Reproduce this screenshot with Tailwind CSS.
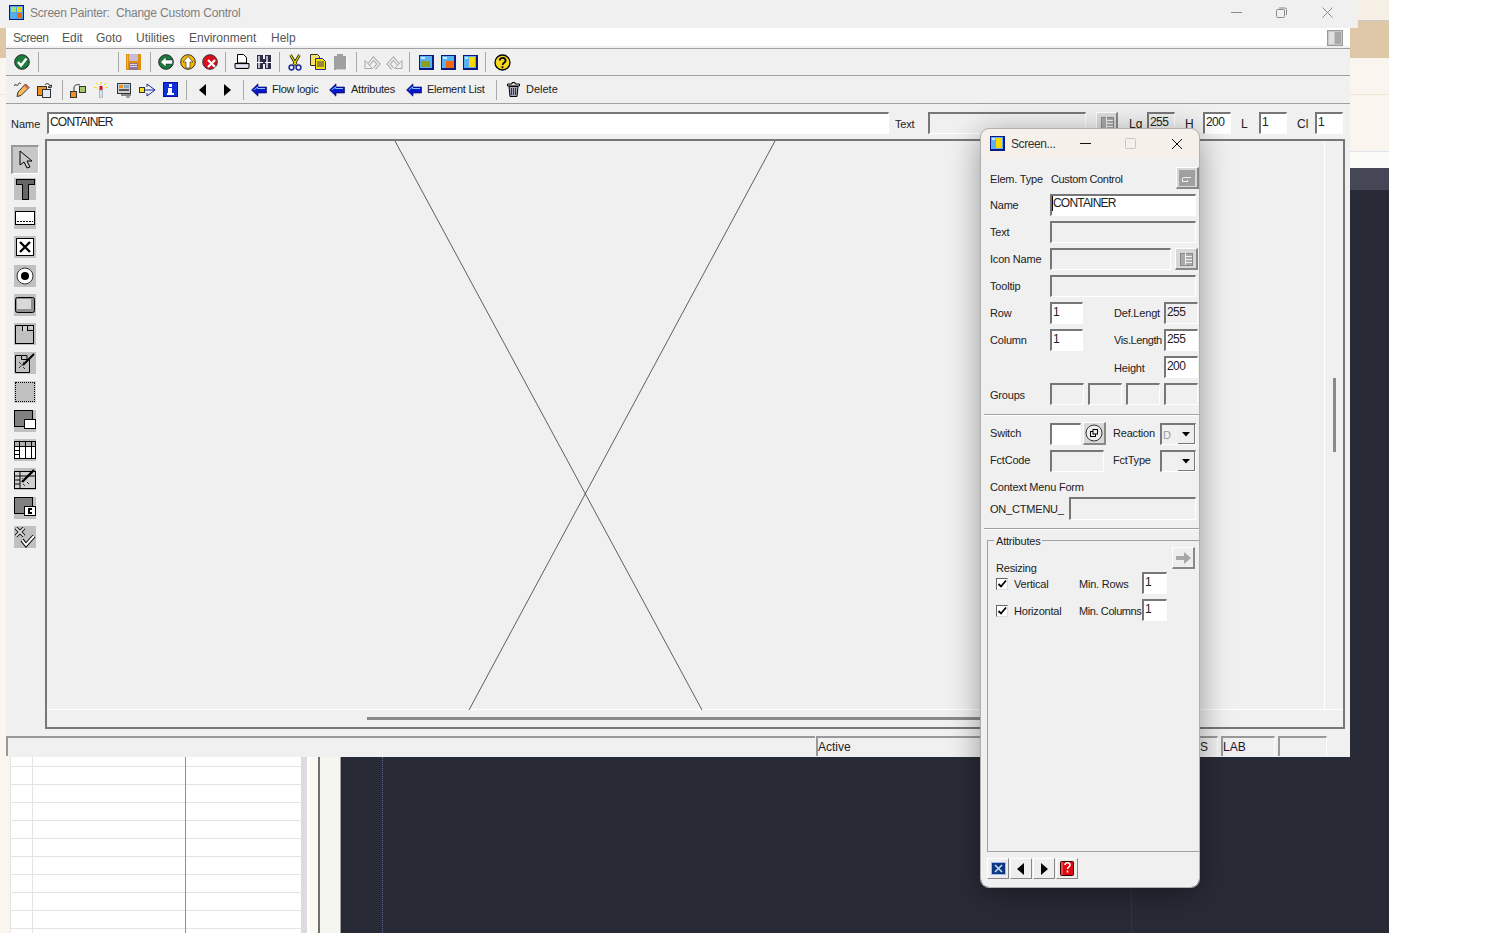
<!DOCTYPE html>
<html lang="en">
<head>
  <meta charset="UTF-8">
  <title>Screen Painter: Change Custom Control</title>
  <script src="https://cdn.jsdelivr.net/npm/@tailwindcss/browser@4"></script>
</head>
<body class="bg-white">
<div class="relative w-[1486px] h-[933px] overflow-hidden bg-white font-['Liberation_Sans',sans-serif] text-[11px] text-[#222]">

  <!-- desktop behind, right side -->
  <div class="absolute left-[1350px] top-0 w-[39px] h-[933px] flex flex-col bg-[#282a36]">
    <div class="h-[20px] bg-[#f5efe6]"></div>
    <div class="h-[38px] bg-[#dec8a8] border-t border-[#c9c9c9]"></div>
    <div class="h-[36px] bg-[#faf6ef]"></div>
    <div class="h-[57px] bg-[#faf6ef] border-t border-[#f3e6d4]"></div>
    <div class="h-[17px] bg-[#fbfbf8] border-t border-[#dfe3ea]"></div>
    <div class="h-[22px] bg-[#454757]"></div>
  </div>

  <!-- desktop behind, bottom -->
  <div class="absolute left-0 top-[757px] w-[1350px] h-[176px] flex bg-[#282a36]">
    <div class="w-[10px] bg-[#f9f6ee]"></div>
    <div class="relative w-[291px] bg-white">
      <div class="h-[10px] border-b border-[#e4e4e4]"></div>
      <div class="h-[18px] border-b border-[#e4e4e4]"></div>
      <div class="h-[18px] border-b border-[#e4e4e4]"></div>
      <div class="h-[18px] border-b border-[#e4e4e4]"></div>
      <div class="h-[18px] border-b border-[#e4e4e4]"></div>
      <div class="h-[18px] border-b border-[#e4e4e4]"></div>
      <div class="h-[18px] border-b border-[#e4e4e4]"></div>
      <div class="h-[18px] border-b border-[#e4e4e4]"></div>
      <div class="h-[18px] border-b border-[#e4e4e4]"></div>
      <div class="h-[18px] border-b border-[#e4e4e4]"></div>
      <div class="absolute left-0 top-0 w-px h-full bg-[#e4e4e4]"></div>
      <div class="absolute left-[22px] top-0 w-px h-full bg-[#e4e4e4]"></div>
      <div class="absolute left-[175px] top-0 w-px h-full bg-[#8f8f8f]"></div>
    </div>
    <div class="w-[6px] bg-[#dcdcde]"></div>
    <div class="w-[3px] bg-white"></div>
    <div class="w-[8px] bg-[#fbf8f2]"></div>
    <div class="w-[2px] bg-[#6e6e6e]"></div>
    <div class="w-[21px] bg-[#f6f6f0] border-r border-[#a0a0a0]"></div>
    <div class="w-[42px] border-r border-dotted border-[#5a6290]"></div>
    <div class="w-[749px] border-r border-dotted border-[#6a2a38]"></div>
  </div>
  <div class="absolute left-0 top-0 w-[6px] h-[757px] flex flex-col bg-[#f9f6ee]">
    <div class="h-[28px] bg-[#f0f0f0]"></div>
    <div class="h-[30px] bg-[#dec8a8]"></div>
    <div class="h-[36px]"></div>
    <div class="border-t border-[#f3e6d4]"></div>
  </div>

  <!-- title bar -->
  <div class="absolute left-0 top-0 w-[1358px] h-[28px] bg-[#f0f0f0] flex items-center pb-[3px]">
    <svg class="ml-[9px]" width="15" height="15" viewBox="0 0 15 15" shape-rendering="crispEdges"><rect width="15" height="15" fill="#0a1a70"/><rect x="1" y="1" width="13" height="13" fill="#4aa8f0"/><rect x="2" y="2" width="5" height="5" fill="#a8e070"/><rect x="8" y="2" width="5" height="5" fill="#f8d000"/><rect x="2" y="8" width="5" height="5" fill="#58b0e8"/><rect x="8" y="8" width="5" height="5" fill="#f06810"/></svg>
    <div class="ml-[6px] w-[230px] text-[12px] text-[#7f7f7f] whitespace-pre tracking-[-0.2px]">Screen Painter:  Change Custom Control</div>
    <svg class="ml-[971px]" width="11" height="11" viewBox="0 0 11 11"><path d="M0 5.500h11" stroke="#8a8a8a"/></svg>
    <svg class="ml-[34px]" width="11" height="11" viewBox="0 0 11 11" fill="none" stroke="#8a8a8a"><rect x="0.500" y="2.500" width="8" height="8" rx="1"/><path d="M3 1h6a1.500 1.500 0 0 1 1.500 1.500V8"/></svg>
    <svg class="ml-[35px]" width="11" height="11" viewBox="0 0 11 11"><path d="M0.500 0.500l10 10M10.500 0.500l-10 10" stroke="#8a8a8a"/></svg>
  </div>

  <!-- main SAP window -->
  <div class="absolute left-[6px] top-[28px] w-[1344px] h-[729px] bg-[#f0f0f0] flex flex-col">
    <!-- menu -->
    <div class="h-[18px] bg-white flex items-center pl-[7px] pt-px text-[#555] text-[12px]">
      <span class="w-[49px] tracking-[-0.4px]">Screen</span><span class="w-[34px]">Edit</span><span class="w-[40px]">Goto</span><span class="w-[53px]">Utilities</span><span class="w-[82px]">Environment</span><span>Help</span>
      <div class="ml-auto mr-[7px] w-[16px] h-[16px] border border-[#9a9a9a] bg-[#c8c8c8] flex justify-center gap-px p-px"><div class="w-[5px] bg-[#e0e0e0]"></div><div class="w-[6px] bg-[#a8a8a8]"></div></div>
    </div>
    <div class="h-[2px]"></div>

    <!-- toolbar 1 -->
    <div class="h-[27px] border-t border-[#a0a0a0] flex items-center pl-[5px]">
      <div class="w-[22px] flex justify-center">
        <svg width="16" height="16" viewBox="0 0 16 16"><circle cx="8" cy="8" r="7.300" fill="#1f7a3e" stroke="#1a3020"/><path d="M4 8l3 3.500 5.500-7" fill="none" stroke="#fff" stroke-width="2.400"/></svg>
      </div>
      <div class="ml-[5px] w-px h-[20px] bg-[#a8a8a8]"></div>
      <div class="ml-[79px] w-px h-[20px] bg-[#a8a8a8]"></div>
      <div class="ml-[3px] w-[22px] flex justify-center">
        <svg width="15" height="16" viewBox="0 0 15 16" shape-rendering="crispEdges"><rect width="15" height="16" fill="#e08e12"/><rect x="1" y="1" width="1" height="14" fill="#f8b040"/><rect x="3" y="0" width="9" height="7" fill="#c8bcd4"/><rect x="3" y="9" width="9" height="7" fill="#8a7a9a"/><rect x="4" y="10" width="7" height="1" fill="#e0d8e8"/><rect x="4" y="12" width="7" height="1" fill="#e0d8e8"/></svg>
      </div>
      <div class="ml-[6px] w-px h-[20px] bg-[#a8a8a8]"></div>
      <div class="ml-1 w-[22px] flex justify-center">
        <svg width="16" height="16" viewBox="0 0 16 16"><circle cx="8" cy="8" r="7.300" fill="#1f7a3e" stroke="#1a3020"/><path d="M2.500 8l5.500-5v3h6.500v4H8v3z" fill="#fff" stroke="#123" stroke-width="0.500"/></svg>
      </div>
      <div class="w-[22px] flex justify-center">
        <svg width="16" height="16" viewBox="0 0 16 16"><circle cx="8" cy="8" r="7.300" fill="#f4b800" stroke="#333"/><path d="M8 2.500l5 5.500h-3v6H6V8H3z" fill="#fff" stroke="#222" stroke-width="0.600"/></svg>
      </div>
      <div class="w-[22px] flex justify-center">
        <svg width="16" height="16" viewBox="0 0 16 16"><circle cx="8" cy="8" r="7.300" fill="#d8101c" stroke="#333"/><path d="M6 6l7 7M13 6l-7 7" stroke="#fff" stroke-width="2.200"/></svg>
      </div>
      <div class="ml-1 w-px h-[20px] bg-[#a8a8a8]"></div>
      <div class="ml-[5px] w-[22px] flex justify-center">
        <svg width="16" height="16" viewBox="0 0 16 16"><path d="M3.500 0.500h6l3 3V9h-9z" fill="#fff" stroke="#000"/><path d="M1 9.500h14v4a1 1 0 0 1-1 1H2a1 1 0 0 1-1-1z" fill="#c8c8d8" stroke="#000"/><path d="M2 12h12" stroke="#fff"/></svg>
      </div>
      <div class="w-[22px] flex justify-center">
        <svg width="16" height="16" viewBox="0 0 16 16" shape-rendering="crispEdges"><rect x="1" y="1" width="6" height="14" fill="#2c2c44"/><rect x="9" y="1" width="6" height="14" fill="#2c2c44"/><rect x="7" y="5" width="2" height="5" fill="#2c2c44"/><rect x="2" y="2" width="2" height="12" fill="#b8b8d0"/><rect x="10" y="2" width="2" height="12" fill="#b8b8d0"/><rect x="1" y="8" width="6" height="1" fill="#fff"/><rect x="9" y="8" width="6" height="1" fill="#fff"/></svg>
      </div>
      <div class="ml-1 w-px h-[20px] bg-[#a8a8a8]"></div>
      <div class="ml-1 w-[22px] flex justify-center">
        <svg width="14" height="17" viewBox="0 0 14 17" fill="none"><path d="M2.500 1l6 10M11.500 1l-6 10" stroke="#000" stroke-width="2.600"/><path d="M2.500 1l6 10M11.500 1l-6 10" stroke="#f0d800" stroke-width="1.400"/><circle cx="3.500" cy="13.500" r="2.400" stroke="#1a2a9a" stroke-width="1.500"/><circle cx="10.500" cy="13.500" r="2.400" stroke="#1a2a9a" stroke-width="1.500"/></svg>
      </div>
      <div class="ml-px w-[22px] flex justify-center">
        <svg width="16" height="16" viewBox="0 0 16 16"><path d="M0.500 0.500h7l2 2v9h-9z" fill="#f8e060" stroke="#303030"/><path d="M5.500 4.500h7l3 3v8h-10z" fill="#f8e000" stroke="#1a2a9a"/><path d="M7 8h7M7 10h7M7 12h7" stroke="#303080"/></svg>
      </div>
      <div class="w-[22px] flex justify-center">
        <svg width="15" height="16" viewBox="0 0 15 16"><path d="M4 0h6v2h3v14H1V2h3z" fill="#a0a0a0"/><path d="M14 4v12H3" fill="none" stroke="#fff"/></svg>
      </div>
      <div class="ml-[5px] w-px h-[20px] bg-[#a8a8a8]"></div>
      <div class="ml-1 w-[22px] flex justify-center">
        <svg width="17" height="15" viewBox="0 0 17 15" fill="none"><path d="M5 9l4.500-5.500 5 5.500-4 4.500" stroke="#a8a8a8" stroke-width="3.400"/><path d="M5 9l4.500-5.500 5 5.500-4 4.500" stroke="#f0f0f0" stroke-width="1.400"/><path d="M1 5.500v8h7.500z" fill="#f0f0f0" stroke="#a8a8a8"/></svg>
      </div>
      <div class="w-[22px] flex justify-center">
        <svg width="17" height="15" viewBox="0 0 17 15" fill="none"><path d="M12 9L7.500 3.500 2.500 9l4 4.500" stroke="#a8a8a8" stroke-width="3.400"/><path d="M12 9L7.500 3.500 2.500 9l4 4.500" stroke="#f0f0f0" stroke-width="1.400"/><path d="M16 5.500v8H8.500z" fill="#f0f0f0" stroke="#a8a8a8"/></svg>
      </div>
      <div class="ml-1 w-px h-[20px] bg-[#a8a8a8]"></div>
      <div class="ml-[5px] w-[22px] flex justify-center">
        <svg width="15" height="15" viewBox="0 0 15 15" shape-rendering="crispEdges"><rect width="15" height="15" fill="#0a1a80"/><rect x="1" y="1" width="12" height="12" fill="#5ab0f0"/><rect x="2" y="6" width="9" height="6" fill="#88a020"/><rect x="2" y="2" width="4" height="2" fill="#c8e8ff"/></svg>
      </div>
      <div class="w-[22px] flex justify-center">
        <svg width="15" height="15" viewBox="0 0 15 15" shape-rendering="crispEdges"><rect width="15" height="15" fill="#0a1a80"/><rect x="1" y="1" width="12" height="12" fill="#5ab0f0"/><rect x="5" y="6" width="8" height="7" fill="#f06810"/><rect x="2" y="2" width="4" height="2" fill="#c8e8ff"/></svg>
      </div>
      <div class="w-[22px] flex justify-center">
        <svg width="15" height="15" viewBox="0 0 15 15" shape-rendering="crispEdges"><rect width="15" height="15" fill="#0a1a80"/><rect x="1" y="1" width="12" height="12" fill="#5ab0f0"/><rect x="6" y="2" width="6" height="10" fill="#f8d800"/><rect x="2" y="2" width="3" height="2" fill="#c8e8ff"/></svg>
      </div>
      <div class="ml-1 w-px h-[20px] bg-[#a8a8a8]"></div>
      <div class="ml-[5px] w-[22px] flex justify-center">
        <svg width="17" height="17" viewBox="0 0 17 17" fill="none"><circle cx="8.500" cy="8.500" r="7.500" fill="#f8d820" stroke="#000" stroke-width="1.300"/><path d="M5.800 6.500c0-3.500 5.800-3.500 5.800 0 0 2.300-3 2.300-3 4.500" stroke="#000" stroke-width="1.800"/><path d="M8.500 12.200v2" stroke="#000" stroke-width="1.800"/></svg>
      </div>
    </div>

    <!-- toolbar 2 -->
    <div class="h-[28px] border-t border-[#a0a0a0] flex items-center pl-[5px] text-[#222]">
      <div class="w-[22px] flex justify-center">
        <svg width="17" height="17" viewBox="0 0 17 17" fill="none"><path d="M0.500 5c1-4 2.500 1 3.500-1s1.500-3 3-1" stroke="#222"/><path d="M3 15.500l1-4.500 7.500-8 3.500 3.500-8 8z" fill="#f8b860" stroke="#333"/><path d="M10.500 4l3.500 3.500" stroke="#e05040" stroke-width="1.500"/></svg>
      </div>
      <div class="ml-px w-[22px] flex justify-center">
        <svg width="16" height="16" viewBox="0 0 16 16"><rect x="0.500" y="4.500" width="9" height="9" fill="#f09020" stroke="#333"/><rect x="5.500" y="7.500" width="8" height="8" fill="#e0ecf8" stroke="#333"/><path d="M8 3c1-2 4-2 5 1l1.500-1-.5 3-3-1 1.500-.5" fill="none" stroke="#222"/></svg>
      </div>
      <div class="ml-[6px] w-px h-[20px] bg-[#a8a8a8]"></div>
      <div class="ml-1 w-[22px] flex justify-center">
        <svg width="16" height="16" viewBox="0 0 16 16"><path d="M4 10V6c0-3 3-4 6-3" fill="none" stroke="#333"/><rect x="0.500" y="9.500" width="6" height="6" fill="#f09020" stroke="#333"/><rect x="9.500" y="4.500" width="6" height="6" fill="#a8c870" stroke="#333"/></svg>
      </div>
      <div class="ml-px w-[22px] flex justify-center">
        <svg width="16" height="16" viewBox="0 0 16 16"><path d="M8 0v3M1 5l3 1M15 5l-3 1M3 1l2 2M13 1l-2 2" stroke="#f8d800"/><rect x="6.500" y="4" width="3" height="4" fill="#d81020"/><rect x="6.500" y="8" width="3" height="8" fill="#d8e0e8" stroke="#8090a0" stroke-width="0.500"/></svg>
      </div>
      <div class="ml-px w-[22px] flex justify-center">
        <svg width="16" height="16" viewBox="0 0 16 16" shape-rendering="crispEdges"><rect x="1" y="1" width="13" height="10" fill="#d0d0d0" stroke="#333"/><rect x="3" y="3" width="4" height="3" fill="#f09020"/><rect x="8" y="3" width="5" height="3" fill="#88a8c8"/><rect x="3" y="7" width="10" height="2" fill="#555"/><rect x="5" y="12" width="10" height="2" fill="#888"/><rect x="10" y="14" width="4" height="2" fill="#a0a0a0"/></svg>
      </div>
      <div class="ml-px w-[22px] flex justify-center">
        <svg width="17" height="16" viewBox="0 0 17 16" fill="none"><rect x="0.500" y="5.500" width="5" height="5" fill="#f8e020" stroke="#333"/><path d="M6 8h10M8 2l8 6-8 6M8 2v3M8 14v-3" stroke="#1a2a9a"/></svg>
      </div>
      <div class="ml-px w-[22px] flex justify-center">
        <svg width="15" height="15" viewBox="0 0 15 15" shape-rendering="crispEdges"><rect width="15" height="15" fill="#0a10a0"/><rect x="1" y="1" width="13" height="13" fill="#1030d8"/><rect x="6" y="2" width="3" height="3" fill="#fff"/><rect x="5" y="6" width="4" height="6" fill="#fff"/><rect x="4" y="11" width="7" height="2" fill="#fff"/></svg>
      </div>
      <div class="ml-[5px] w-px h-[20px] bg-[#a8a8a8]"></div>
      <div class="ml-[5px] w-[22px] flex justify-center">
        <svg width="8" height="12" viewBox="0 0 8 12"><path d="M7 0v12L0 6z" fill="#000"/></svg>
      </div>
      <div class="ml-[2px] w-[22px] flex justify-center">
        <svg width="8" height="12" viewBox="0 0 8 12"><path d="M1 0v12l7-6z" fill="#000"/></svg>
      </div>
      <div class="ml-[5px] w-px h-[20px] bg-[#a8a8a8]"></div>
      <div class="ml-1 w-[22px] flex justify-center">
        <svg width="16" height="14" viewBox="0 0 16 14"><path d="M0.500 7L7 0.800V4h8.500v6H7v3.200z" fill="#0818c8" stroke="#000050" stroke-width="0.600"/><path d="M3 7l3.500-3v1.500H14" fill="none" stroke="#80c8ff"/></svg>
      </div>
      <div class="ml-[2px] w-[47px] whitespace-nowrap tracking-[-0.25px]">Flow logic</div>
      <div class="ml-[7px] w-[22px] flex justify-center">
        <svg width="16" height="14" viewBox="0 0 16 14"><path d="M0.500 7L7 0.800V4h8.500v6H7v3.200z" fill="#0818c8" stroke="#000050" stroke-width="0.600"/><path d="M3 7l3.500-3v1.500H14" fill="none" stroke="#80c8ff"/></svg>
      </div>
      <div class="ml-[3px] w-[44px] whitespace-nowrap tracking-[-0.25px]">Attributes</div>
      <div class="ml-2 w-[22px] flex justify-center">
        <svg width="16" height="14" viewBox="0 0 16 14"><path d="M0.500 7L7 0.800V4h8.500v6H7v3.200z" fill="#0818c8" stroke="#000050" stroke-width="0.600"/><path d="M3 7l3.500-3v1.500H14" fill="none" stroke="#80c8ff"/></svg>
      </div>
      <div class="ml-[2px] w-[57px] whitespace-nowrap tracking-[-0.25px]">Element List</div>
      <div class="ml-3 w-px h-[20px] bg-[#a8a8a8]"></div>
      <div class="ml-[5px] w-[22px] flex justify-center">
        <svg width="13" height="15" viewBox="0 0 13 15"><path d="M5 0.500h3v1.500h4.500v2H0.500V2H5z" fill="#e0e0e0" stroke="#000"/><path d="M2 4.500h9l-1 10H3z" fill="#a8a8b8" stroke="#000"/><path d="M4.500 6v7M6.500 6v7M8.500 6v7" stroke="#333"/></svg>
      </div>
      <div class="ml-[2px] whitespace-nowrap">Delete</div>
    </div>

    <!-- name row -->
    <div class="h-[36px] border-t border-[#a0a0a0] flex items-start pl-[5px]">
      <div class="w-[36px] mt-[9px] h-[21px] leading-[22px]">Name</div>
      <div class="mt-[8px] w-[842px] h-[22px] bg-white border-t-2 border-l-2 border-t-[#777] border-l-[#777] border-b border-r border-b-white border-r-white pl-px leading-[17px] text-[12px] tracking-[-0.8px]">CONTAINER</div>
      <div class="mt-[9px] ml-[6px] w-[33px] h-[21px] leading-[22px] tracking-[-0.2px]">Text</div>
      <div class="mt-[8px] w-[158px] h-[22px] border-t-2 border-l-2 border-t-[#777] border-l-[#777] border-b border-r border-b-white border-r-white"></div>
      <div class="mt-[8px] ml-[10px] w-[22px] h-[22px] bg-[#dcdcdc] border-r-2 border-b-2 border-r-[#888] border-b-[#888] border-t border-l border-t-white border-l-white flex items-center justify-center">
        <svg width="14" height="14" viewBox="0 0 14 14" shape-rendering="crispEdges"><rect x="1" y="1" width="12" height="12" fill="#aaa" stroke="#888"/><path d="M6 1v12M6 4h7M6 7h7M6 10h7" stroke="#f0f0f0"/></svg>
      </div>
      <div class="mt-[9px] ml-[11px] w-[18px] leading-[22px] text-[12px]">Lg</div>
      <div class="mt-[8px] w-[28px] h-[22px] border-t-2 border-l-2 border-t-[#777] border-l-[#777] border-b border-r border-b-white border-r-white pl-px leading-[16px] text-[12px] tracking-[-0.6px]">255</div>
      <div class="mt-[9px] ml-[10px] w-[18px] leading-[22px] text-[12px]">H</div>
      <div class="mt-[8px] w-[28px] h-[22px] bg-white border-t-2 border-l-2 border-t-[#777] border-l-[#777] border-b border-r border-b-white border-r-white pl-px leading-[16px] text-[12px] tracking-[-0.6px]">200</div>
      <div class="mt-[9px] ml-[10px] w-[18px] leading-[22px] text-[12px]">L</div>
      <div class="mt-[8px] w-[28px] h-[22px] bg-white border-t-2 border-l-2 border-t-[#777] border-l-[#777] border-b border-r border-b-white border-r-white pl-px leading-[16px] text-[12px]">1</div>
      <div class="mt-[9px] ml-[10px] w-[18px] leading-[22px] text-[12px]">Cl</div>
      <div class="mt-[8px] w-[28px] h-[22px] bg-white border-t-2 border-l-2 border-t-[#777] border-l-[#777] border-b border-r border-b-white border-r-white pl-px leading-[16px] text-[12px]">1</div>
    </div>

    <!-- palette + canvas -->
    <div class="h-[590px] flex">
      <div class="w-[39px] pt-[6px] pr-px flex flex-col items-center">
        <div class="w-[28px] h-[29px] bg-[#c8c8c8] border-t-2 border-l-2 border-t-[#999] border-l-[#999] border-b border-r border-b-white border-r-white flex items-center justify-center">
          <svg width="16" height="20" viewBox="0 0 16 20"><path d="M2 1v14l4-3 3 6 3-1-3-6h5z" fill="#c8c8c8" stroke="#000"/></svg>
        </div>
        <div class="h-[29px] flex items-center">
          <div class="w-[22px] h-[22px] bg-[#c0c0c0] flex items-center justify-center"><svg width="20" height="22" viewBox="0 0 20 22" shape-rendering="crispEdges"><path d="M1 1h18v5h-6v15H7V6H1z" fill="#666" stroke="#000"/></svg></div>
        </div>
        <div class="h-[29px] flex items-center">
          <div class="w-[22px] h-[22px] bg-[#c0c0c0] flex items-center justify-center"><svg width="20" height="14" viewBox="0 0 20 14" shape-rendering="crispEdges"><rect x="0.500" y="0.500" width="19" height="13" fill="#fff" stroke="#000" stroke-width="1"/><path d="M2 10h16" stroke="#000" stroke-dasharray="2 1"/></svg></div>
        </div>
        <div class="h-[29px] flex items-center">
          <div class="w-[22px] h-[22px] bg-[#c0c0c0] flex items-center justify-center"><svg width="18" height="18" viewBox="0 0 18 18"><rect x="0.500" y="0.500" width="17" height="17" fill="#fff" stroke="#000"/><path d="M4 4l10 10M14 4L4 14" stroke="#000" stroke-width="2.400"/></svg></div>
        </div>
        <div class="h-[29px] flex items-center">
          <div class="w-[22px] h-[22px] bg-[#c0c0c0] flex items-center justify-center"><svg width="18" height="18" viewBox="0 0 18 18"><circle cx="9" cy="9" r="8" fill="#fff" stroke="#333"/><circle cx="9" cy="9" r="4" fill="#000"/></svg></div>
        </div>
        <div class="h-[29px] flex items-center">
          <div class="w-[22px] h-[22px] bg-[#c0c0c0] flex items-center justify-center"><svg width="20" height="16" viewBox="0 0 20 16"><rect x="0.500" y="0.500" width="19" height="15" rx="2" fill="#909090" stroke="#000"/><rect x="2" y="2" width="14" height="10" fill="#d8d8d8"/></svg></div>
        </div>
        <div class="h-[29px] flex items-center">
          <div class="w-[22px] h-[22px] bg-[#c0c0c0] flex items-center justify-center"><svg width="20" height="20" viewBox="0 0 20 20" shape-rendering="crispEdges"><path d="M0.500 1.500h7v5h11v13h-18z" fill="#c0c0c0" stroke="#000"/><path d="M7.500 6.500v-5h5v5M12.500 1.500h6v5" fill="#d0d0d0" stroke="#000"/></svg></div>
        </div>
        <div class="h-[29px] flex items-center">
          <div class="w-[22px] h-[22px] bg-[#c0c0c0] flex items-center justify-center"><svg width="20" height="20" viewBox="0 0 20 20"><path d="M0.500 2.500h6v4h8v13h-14z" fill="#c0c0c0" stroke="#000"/><path d="M7 2.500h5v4" fill="none" stroke="#000"/><path d="M8 12L19 1" stroke="#000" stroke-width="2"/><path d="M4 9l2 2M8 14l2 2M4 15l2-2M9 9l-1 1M6 12h2" stroke="#333"/></svg></div>
        </div>
        <div class="h-[29px] flex items-center">
          <div class="w-[22px] h-[22px] bg-[#d0d0d0] flex items-center justify-center"><div class="w-[20px] h-[20px] bg-[#c0c0c0] border border-dotted border-black"></div></div>
        </div>
        <div class="h-[29px] flex items-center">
          <div class="w-[22px] h-[22px] bg-[#c0c0c0] flex items-start justify-start"><svg width="22" height="20" viewBox="0 0 22 20" shape-rendering="crispEdges"><rect x="0.500" y="0.500" width="18" height="16" fill="#808080" stroke="#000"/><rect x="10.500" y="9.500" width="11" height="9" fill="#fff" stroke="#000"/></svg></div>
        </div>
        <div class="h-[29px] flex items-center">
          <div class="w-[22px] h-[22px] bg-[#c0c0c0] flex items-center justify-center"><svg width="22" height="18" viewBox="0 0 22 18" shape-rendering="crispEdges"><rect x="0.500" y="0.500" width="21" height="17" fill="#fff" stroke="#000"/><rect x="1" y="1" width="20" height="4" fill="#b0b0b0"/><path d="M5.500 0v18M11.500 0v18M17.500 0v18M0 5.500h22M0 9.500h5M0 13.500h5" stroke="#000"/></svg></div>
        </div>
        <div class="h-[29px] flex items-center">
          <div class="w-[22px] h-[22px] bg-[#c0c0c0] flex items-center justify-center"><svg width="22" height="20" viewBox="0 0 22 20"><rect x="0.500" y="2.500" width="21" height="17" fill="#d0d0d0" stroke="#000"/><path d="M6 2v18M0 7h22M0 11h6M0 15h6" stroke="#000"/><path d="M8 13L20 1" stroke="#000" stroke-width="2.400"/><path d="M8 9l2 2M9 15l2 2M13 13l2 2" stroke="#333"/></svg></div>
        </div>
        <div class="h-[29px] flex items-center">
          <div class="w-[22px] h-[22px] bg-[#c0c0c0] flex items-start justify-start"><svg width="22" height="20" viewBox="0 0 22 20" shape-rendering="crispEdges"><rect x="0.500" y="0.500" width="18" height="16" fill="#808080" stroke="#000"/><rect x="10.500" y="9.500" width="11" height="9" fill="#fff" stroke="#000"/><path d="M18 12h-3v4h3" fill="none" stroke="#000" stroke-width="1.500"/></svg></div>
        </div>
        <div class="h-[29px] flex items-center">
          <div class="w-[22px] h-[22px] bg-[#c0c0c0] flex items-center justify-center"><svg width="22" height="22" viewBox="0 0 22 22"><path d="M2 2l8 8M10 2l-8 8" stroke="#000" stroke-width="3.600"/><path d="M2 2l8 8M10 2l-8 8" stroke="#e0e0e0" stroke-width="1.800"/><path d="M8 14l4 5 8-9" fill="none" stroke="#000" stroke-width="3.800"/><path d="M8 14l4 5 8-9" fill="none" stroke="#fff" stroke-width="2"/></svg></div>
        </div>
      </div>

      <!-- canvas -->
      <div class="relative w-[1300px] border-t-2 border-l-2 border-t-[#777] border-l-[#777] border-r-2 border-b-2 border-r-[#777] border-b-[#777] flex flex-col">
        <div class="relative h-[569px] border-b border-white flex">
          <div class="relative w-[1278px] border-r border-white">
            <svg class="absolute left-0 top-0" width="1278" height="569" viewBox="0 0 1278 569"><path d="M348 0L655 569M728 0L422 569" stroke="#3a3a3a" stroke-width="0.800" fill="none"/></svg>
          </div>
          <div class="relative flex-1">
            <div class="absolute left-[8px] top-[237px] w-[3px] h-[74px] bg-[#8a8a8a]"></div>
          </div>
        </div>
        <div class="relative flex-1">
          <div class="absolute left-[320px] top-[7px] w-[700px] h-[3px] bg-[#8a8a8a]"></div>
        </div>
      </div>
    </div>

    <!-- status bar -->
    <div class="mt-[7px] h-[20px] flex">
      <div class="w-[809px] border-t-2 border-l-2 border-t-[#999] border-l-[#999]"></div>
      <div class="ml-px w-[368px] border-t-2 border-l-2 border-t-[#999] border-l-[#999] text-[12px] leading-[19px]">Active</div>
      <div class="ml-[3px] w-[31px] border-t-2 border-t-[#999] text-right pr-[9px] leading-[19px] text-[12px] border-r border-white">NS</div>
      <div class="ml-[3px] w-[54px] border-t-2 border-l-2 border-t-[#999] border-l-[#999] border-r border-white text-[12px] leading-[19px] text-[#201030]">LAB</div>
      <div class="ml-[3px] w-[49px] border-t-2 border-l-2 border-t-[#999] border-l-[#999] border-r border-white"></div>
    </div>
  </div>

  <!-- floating dialog -->
  <div class="absolute left-[981px] top-[129px] w-[218px] h-[758px] rounded-[8px] bg-[#f0f0f0] shadow-[0_6px_32px_rgba(0,0,0,0.4)] overflow-hidden flex flex-col outline outline-[#b0b0b0]">
    <div class="h-[29px] bg-[#f6f0eb] flex items-center">
      <svg class="ml-[9px]" width="15" height="15" viewBox="0 0 15 15" shape-rendering="crispEdges"><rect width="15" height="15" fill="#0a1a80"/><rect x="1" y="1" width="12" height="12" fill="#5ab0f0"/><rect x="6" y="2" width="6" height="10" fill="#f8d800"/><rect x="2" y="2" width="3" height="2" fill="#c8e8ff"/></svg>
      <div class="ml-[6px] w-[50px] text-[12px] text-[#333] tracking-[-0.4px]">Screen...</div>
      <svg class="ml-[19px]" width="11" height="11" viewBox="0 0 11 11"><path d="M0 5.500h11" stroke="#111"/></svg>
      <svg class="ml-[34px]" width="11" height="11" viewBox="0 0 11 11"><rect x="0.500" y="0.500" width="10" height="10" rx="1" fill="none" stroke="#c8c8c8"/></svg>
      <svg class="ml-[35px]" width="12" height="12" viewBox="0 0 12 12"><path d="M1 1l10 10M11 1L1 11" stroke="#111"/></svg>
    </div>

    <div class="pt-[7px] pl-[9px] tracking-[-0.2px]">
      <!-- Elem. Type -->
      <div class="h-[27px] flex items-start pt-[2px]">
        <div class="w-[61px] h-[22px] leading-[24px]">Elem. Type</div>
        <div class="w-[125px] h-[22px] leading-[24px] tracking-[-0.35px]">Custom Control</div>
        <div class="w-[23px] h-[22px] bg-[#d8d8d8] border-r-2 border-b-2 border-r-[#888] border-b-[#888] border-t border-l border-t-white border-l-white flex items-center justify-center">
          <svg width="16" height="16" viewBox="0 0 16 16" shape-rendering="crispEdges"><rect width="16" height="16" fill="#a0a0a0"/><path d="M3.500 7.500h8M3.500 7.500v4h5v-2" fill="none" stroke="#eee"/></svg>
        </div>
      </div>
      <!-- Name -->
      <div class="h-[27px] flex items-start pt-[2px]">
        <div class="w-[60px] h-[22px] leading-[22px]">Name</div>
        <div class="relative w-[146px] h-[22px] bg-white border-t-2 border-l-2 border-t-[#777] border-l-[#777] border-b border-r border-b-white border-r-white pl-px leading-[15px] text-[12px] tracking-[-0.8px]">CONTAINER<div class="absolute left-0 top-0 w-px h-[15px] bg-black"></div></div>
      </div>
      <!-- Text -->
      <div class="h-[27px] flex items-start pt-[2px]">
        <div class="w-[60px] h-[22px] leading-[22px]">Text</div>
        <div class="w-[146px] h-[22px] border-t-2 border-l-2 border-t-[#777] border-l-[#777] border-b border-r border-b-white border-r-white"></div>
      </div>
      <!-- Icon Name -->
      <div class="h-[27px] flex items-start pt-[2px]">
        <div class="w-[60px] h-[22px] leading-[22px]">Icon Name</div>
        <div class="w-[121px] h-[22px] border-t-2 border-l-2 border-t-[#777] border-l-[#777] border-b border-r border-b-white border-r-white"></div>
        <div class="ml-[4px] w-[23px] h-[22px] bg-[#d8d8d8] border-r-2 border-b-2 border-r-[#888] border-b-[#888] border-t border-l border-t-white border-l-white flex items-center justify-center">
          <svg width="14" height="14" viewBox="0 0 14 14" shape-rendering="crispEdges"><rect x="1" y="1" width="12" height="12" fill="#aaa" stroke="#888"/><path d="M6 1v12M6 4h7M6 7h7M6 10h7" stroke="#f0f0f0"/></svg>
        </div>
      </div>
      <!-- Tooltip -->
      <div class="h-[27px] flex items-start pt-[2px]">
        <div class="w-[60px] h-[22px] leading-[22px]">Tooltip</div>
        <div class="w-[146px] h-[22px] border-t-2 border-l-2 border-t-[#777] border-l-[#777] border-b border-r border-b-white border-r-white"></div>
      </div>
      <!-- Row -->
      <div class="h-[27px] flex items-start pt-[2px]">
        <div class="w-[60px] h-[22px] leading-[22px]">Row</div>
        <div class="w-[33px] h-[22px] bg-white border-t-2 border-l-2 border-t-[#777] border-l-[#777] border-b border-r border-b-white border-r-white pl-px leading-[16px] text-[12px]">1</div>
        <div class="ml-[31px] w-[50px] h-[22px] leading-[22px] whitespace-nowrap">Def.Lengt</div>
        <div class="w-[34px] h-[22px] border-t-2 border-l-2 border-t-[#777] border-l-[#777] border-b border-r border-b-white border-r-white pl-px leading-[16px] text-[12px] tracking-[-0.6px]">255</div>
      </div>
      <!-- Column -->
      <div class="h-[27px] flex items-start pt-[2px]">
        <div class="w-[60px] h-[22px] leading-[22px]">Column</div>
        <div class="w-[33px] h-[22px] bg-white border-t-2 border-l-2 border-t-[#777] border-l-[#777] border-b border-r border-b-white border-r-white pl-px leading-[16px] text-[12px]">1</div>
        <div class="ml-[31px] w-[50px] h-[22px] leading-[22px] whitespace-nowrap tracking-[-0.4px]">Vis.Length</div>
        <div class="w-[34px] h-[22px] bg-white border-t-2 border-l-2 border-t-[#777] border-l-[#777] border-b border-r border-b-white border-r-white pl-px leading-[16px] text-[12px] tracking-[-0.6px]">255</div>
      </div>
      <!-- Height -->
      <div class="h-[27px] flex items-start pt-[2px]">
        <div class="ml-[124px] w-[50px] h-[22px] leading-[24px]">Height</div>
        <div class="w-[34px] h-[22px] bg-white border-t-2 border-l-2 border-t-[#777] border-l-[#777] border-b border-r border-b-white border-r-white pl-px leading-[16px] text-[12px] tracking-[-0.6px]">200</div>
      </div>
      <!-- Groups -->
      <div class="h-[27px] flex items-start pt-[2px]">
        <div class="w-[60px] h-[22px] leading-[24px]">Groups</div>
        <div class="w-[34px] h-[22px] border-t-2 border-l-2 border-t-[#777] border-l-[#777] border-b border-r border-b-white border-r-white"></div>
        <div class="ml-[4px] w-[34px] h-[22px] border-t-2 border-l-2 border-t-[#777] border-l-[#777] border-b border-r border-b-white border-r-white"></div>
        <div class="ml-[4px] w-[34px] h-[22px] border-t-2 border-l-2 border-t-[#777] border-l-[#777] border-b border-r border-b-white border-r-white"></div>
        <div class="ml-[4px] w-[34px] h-[22px] border-t-2 border-l-2 border-t-[#777] border-l-[#777] border-b border-r border-b-white border-r-white"></div>
      </div>
    </div>

    <div class="mt-[6px] ml-[3px] h-[2px] border-t border-[#a0a0a0] border-b border-b-white"></div>

    <div class="pt-[5px] pl-[9px] tracking-[-0.2px]">
      <!-- Switch -->
      <div class="h-[27px] flex items-start pt-[2px]">
        <div class="w-[60px] h-[22px] leading-[20px]">Switch</div>
        <div class="w-[31px] h-[22px] bg-white border-t-2 border-l-2 border-t-[#777] border-l-[#777] border-b border-r border-b-white border-r-white"></div>
        <div class="ml-[2px] -mt-px w-[23px] h-[23px] bg-[#d8d8d8] border-r-2 border-b-2 border-r-[#888] border-b-[#888] border-t border-l border-t-white border-l-white flex items-center justify-center">
          <svg width="18" height="18" viewBox="0 0 18 18" fill="none"><circle cx="9" cy="9" r="8" fill="#eee" stroke="#333"/><rect x="5.500" y="7.500" width="5" height="5" stroke="#000"/><rect x="8" y="5.500" width="4.500" height="4.500" fill="#eee" stroke="#000"/></svg>
        </div>
        <div class="ml-[7px] w-[47px] h-[22px] leading-[20px]">Reaction</div>
        <div class="w-[36px] h-[22px] border-t-2 border-l-2 border-t-[#777] border-l-[#777] border-b border-r border-b-white border-r-white flex">
          <div class="flex-1 pl-px leading-[20px] text-[#999]">D</div>
          <div class="w-[17px] bg-[#eee] border-r border-b border-r-[#777] border-b-[#777] flex items-center justify-center"><svg width="8" height="5" viewBox="0 0 8 5"><path d="M0 0h8L4 4.500z" fill="#000"/></svg></div>
        </div>
      </div>
      <!-- FctCode -->
      <div class="h-[27px] flex items-start pt-[2px]">
        <div class="w-[60px] h-[22px] leading-[20px]">FctCode</div>
        <div class="w-[54px] h-[22px] border-t-2 border-l-2 border-t-[#777] border-l-[#777] border-b border-r border-b-white border-r-white"></div>
        <div class="ml-[9px] w-[47px] h-[22px] leading-[20px]">FctType</div>
        <div class="w-[36px] h-[22px] border-t-2 border-l-2 border-t-[#777] border-l-[#777] border-b border-r border-b-white border-r-white flex">
          <div class="flex-1"></div>
          <div class="w-[17px] bg-[#eee] border-r border-b border-r-[#777] border-b-[#777] flex items-center justify-center"><svg width="8" height="5" viewBox="0 0 8 5"><path d="M0 0h8L4 4.500z" fill="#000"/></svg></div>
        </div>
      </div>
      <div class="mt-[3px] h-[19px] leading-[19px]">Context Menu Form</div>
      <div class="h-[23px] flex items-center">
        <div class="w-[80px] h-[23px] leading-[24px] whitespace-nowrap">ON_CTMENU_</div>
        <div class="-ml-px w-[127px] h-[23px] border-t-2 border-l-2 border-t-[#777] border-l-[#777] border-b border-r border-b-white border-r-white"></div>
      </div>
    </div>

    <div class="mt-[8px] ml-[3px] h-[2px] border-t border-[#a0a0a0] border-b border-b-white"></div>

    <!-- Attributes group -->
    <div class="relative mt-[10px] ml-[6px] h-[312px] border-t border-l border-b border-[#a0a0a0] tracking-[-0.2px]">
      <div class="absolute left-[6px] -top-[6px] px-[2px] bg-[#f0f0f0] leading-[13px]">Attributes</div>
      <div class="h-[31px] pt-[6px] flex items-start pl-[8px]">
        <div class="mt-[15px] w-[176px] leading-[13px]">Resizing</div>
        <div class="w-[23px] h-[22px] bg-[#eee] border-r-2 border-b-2 border-r-[#888] border-b-[#888] border-t border-l border-t-white border-l-white flex items-center justify-center">
          <svg width="15" height="12" viewBox="0 0 15 12"><path d="M0 4h8V0l7 6-7 6V8H0z" fill="#a8a8a8"/></svg>
        </div>
      </div>
      <div class="h-[27px] flex items-start pl-[8px]">
        <div class="mt-[6px] w-[12px] h-[12px] bg-white border-t border-l border-[#666] border-b border-r border-b-[#ddd] border-r-[#ddd] flex items-center justify-center"><svg width="10" height="10" viewBox="0 0 10 10"><path d="M1.500 5l2.500 2.500 5-6" fill="none" stroke="#000" stroke-width="1.800"/></svg></div>
        <div class="ml-[6px] w-[65px] h-[22px] leading-[24px]">Vertical</div>
        <div class="w-[63px] h-[22px] leading-[24px] whitespace-nowrap">Min. Rows</div>
        <div class="w-[25px] h-[22px] bg-white border-t-2 border-l-2 border-t-[#777] border-l-[#777] border-b border-r border-b-white border-r-white pl-px leading-[16px] text-[12px]">1</div>
      </div>
      <div class="h-[27px] flex items-start pl-[8px]">
        <div class="mt-[6px] w-[12px] h-[12px] bg-white border-t border-l border-[#666] border-b border-r border-b-[#ddd] border-r-[#ddd] flex items-center justify-center"><svg width="10" height="10" viewBox="0 0 10 10"><path d="M1.500 5l2.500 2.500 5-6" fill="none" stroke="#000" stroke-width="1.800"/></svg></div>
        <div class="ml-[6px] w-[65px] h-[22px] leading-[24px]">Horizontal</div>
        <div class="w-[63px] h-[22px] leading-[24px] whitespace-nowrap tracking-[-0.4px]">Min. Columns</div>
        <div class="w-[25px] h-[22px] bg-white border-t-2 border-l-2 border-t-[#777] border-l-[#777] border-b border-r border-b-white border-r-white pl-px leading-[16px] text-[12px]">1</div>
      </div>
    </div>

    <!-- footer buttons -->
    <div class="mt-[6px] ml-[6px] flex gap-px">
      <div class="w-[22px] h-[21px] bg-[#eee] border-r border-b border-r-[#888] border-b-[#888] border-t border-l border-t-white border-l-white flex items-center justify-center">
        <svg width="15" height="13" viewBox="0 0 15 13"><rect width="15" height="13" fill="#a0b8f0"/><rect x="1" y="1" width="13" height="11" fill="#0a3880"/><path d="M4 3l7 7M11 3l-7 7" stroke="#c8d8f0" stroke-width="1.600"/></svg>
      </div>
      <div class="w-[22px] h-[21px] bg-[#eee] border-r border-b border-r-[#888] border-b-[#888] border-t border-l border-t-white border-l-white flex items-center justify-center">
        <svg width="8" height="12" viewBox="0 0 8 12"><path d="M7 0v12L0 6z" fill="#000"/></svg>
      </div>
      <div class="w-[22px] h-[21px] bg-[#eee] border-r border-b border-r-[#888] border-b-[#888] border-t border-l border-t-white border-l-white flex items-center justify-center">
        <svg width="8" height="12" viewBox="0 0 8 12"><path d="M1 0v12l7-6z" fill="#000"/></svg>
      </div>
      <div class="w-[22px] h-[21px] bg-[#eee] border-r border-b border-r-[#888] border-b-[#888] border-t border-l border-t-white border-l-white flex items-center justify-center">
        <svg width="14" height="15" viewBox="0 0 14 15"><rect x="0.500" y="0.500" width="13" height="14" rx="1" fill="#e00810" stroke="#300"/><path d="M2 1v13" stroke="#ff8080"/><path d="M5 4c0-3 5-3 5 0 0 2-2.500 2-2.500 4" fill="none" stroke="#fff" stroke-width="1.600"/><path d="M7.500 9.500v2" stroke="#fff" stroke-width="1.600"/></svg>
      </div>
    </div>
  </div>
</div>
</body>
</html>
